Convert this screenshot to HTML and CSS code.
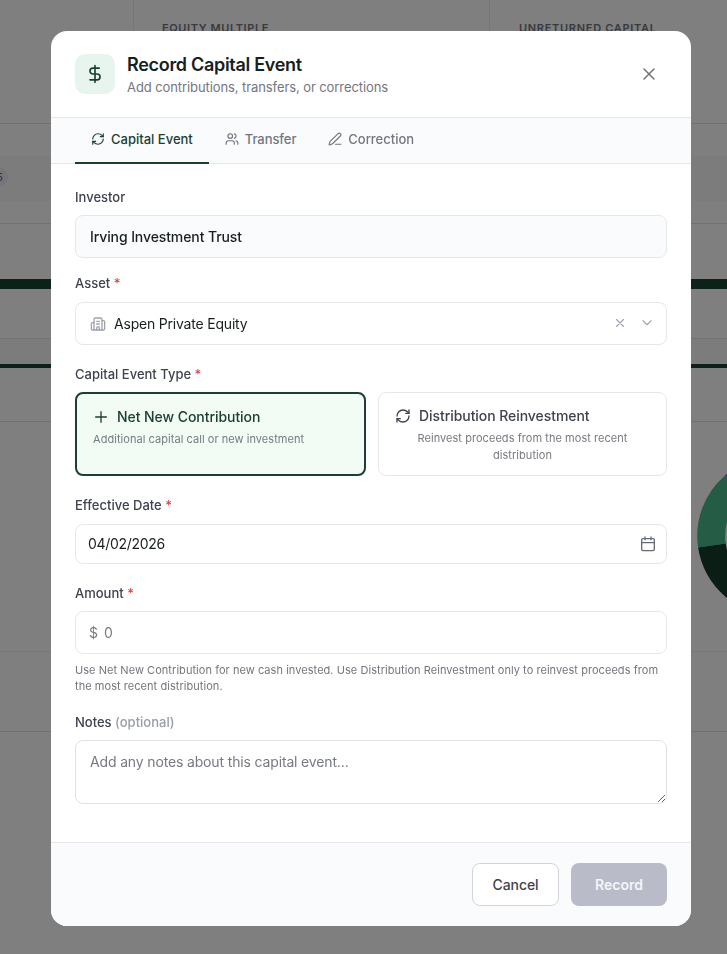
FILE: index.html
```html
<!DOCTYPE html>
<html lang="en">
<head>
<meta charset="utf-8">
<title>Record Capital Event</title>
<link rel="stylesheet" href="styles.css">
</head>
<body>
<svg class="sprite" aria-hidden="true">
  <symbol id="refresh" viewBox="0 0 24 24"><path d="M3 12a9 9 0 0 1 9-9 9.75 9.75 0 0 1 6.74 2.74L21 8"/><path d="M21 3v5h-5"/><path d="M21 12a9 9 0 0 1-9 9 9.75 9.75 0 0 1-6.74-2.74L3 16"/><path d="M8 16H3v5"/></symbol>
  <symbol id="close" viewBox="0 0 24 24"><path d="M18 6 6 18M6 6l12 12"/></symbol>
</svg>
<div class="page">
  <div class="stats">
    <div class="stat stat-first"></div>
    <div class="stat">EQUITY MULTIPLE</div>
    <div class="stat">UNRETURNED CAPITAL</div>
  </div>
  <div class="filters"><div class="filter-band"><span class="count">5</span></div></div>
  <div class="row row-a"></div>
  <div class="bar bar-thick"></div>
  <div class="row row-b"></div>
  <div class="row row-c"></div>
  <div class="bar bar-thin"></div>
  <div class="row row-d"></div>
  <div class="row row-e">
    <svg class="donut" viewBox="0 0 160 160"><path class="seg-purple" d="M28 19.500A79.500 79.500 0 0 1 80 .5V28A52 52 0 0 0 47 40Z"/><path class="seg-green" d="M1.1 91.5A79.5 79.5 0 0 1 28 19.500L47 40A52 52 0 0 0 28.700 87.500Z"/><path class="seg-dark" d="M1.1 91.5 28.700 87.500A52 52 0 0 0 80 132V159.500A79.500 79.500 0 0 1 1.1 91.500Z"/></svg>
  </div>
  <div class="row row-f"></div>
</div>
<div class="overlay">
  <div class="modal" role="dialog">
    <header class="header">
      <div class="badge"><svg class="icon i20" viewBox="0 0 24 24"><path d="M12 2v20M17 5H9.5a3.5 3.5 0 0 0 0 7h5a3.5 3.5 0 0 1 0 7H6"/></svg></div>
      <div class="heading">
        <h1 class="title">Record Capital Event</h1>
        <p class="subtitle">Add contributions, transfers, or corrections</p>
      </div>
      <button class="close"><svg class="icon i20 slim"><use href="#close"/></svg></button>
    </header>
    <nav class="tabs">
      <button class="tab active"><svg class="icon i14"><use href="#refresh"/></svg>Capital Event</button>
      <button class="tab"><svg class="icon i14" viewBox="0 0 24 24"><path d="M16 21v-2a4 4 0 0 0-4-4H6a4 4 0 0 0-4 4v2"/><circle cx="9" cy="7" r="4"/><path d="M22 21v-2a4 4 0 0 0-3-3.87M16 3.13a4 4 0 0 1 0 7.75"/></svg>Transfer</button>
      <button class="tab tab-correction"><svg class="icon i14" viewBox="0 0 24 24"><path d="M13 21h9"/><path d="M21.17 6.81a1 1 0 0 0-3.98-3.98L3.84 16.17a2 2 0 0 0-.5.83l-1.32 4.35a.5.5 0 0 0 .62.62l4.35-1.32a2 2 0 0 0 .83-.5z"/></svg>Correction</button>
    </nav>
    <main class="body">
      <div class="label">Investor</div>
      <div class="control readonly">Irving Investment Trust</div>

      <div class="label label-asset">Asset <span class="req">*</span></div>
      <div class="control select">
        <svg class="icon i16 muted" viewBox="0 0 24 24"><path d="M10 12h4M10 8h4M14 21v-3a2 2 0 0 0-4 0v3"/><path d="M6 10H4a2 2 0 0 0-2 2v7a2 2 0 0 0 2 2h16a2 2 0 0 0 2-2V9a2 2 0 0 0-2-2h-2"/><path d="M6 21V5a2 2 0 0 1 2-2h8a2 2 0 0 1 2 2v16"/></svg>
        <span class="select-value">Aspen Private Equity</span>
        <svg class="icon i14 muted"><use href="#close"/></svg>
        <svg class="icon i14 muted" viewBox="0 0 24 24"><path d="m5 8 7 7 7-7"/></svg>
      </div>

      <div class="label label-type">Capital Event Type <span class="req">*</span></div>
      <div class="options">
        <button class="option selected">
          <span class="option-title"><svg class="icon i16" viewBox="0 0 24 24"><path d="M4 12h16M12 4v16"/></svg>Net New Contribution</span>
          <span class="option-text">Additional capital call or new investment</span>
        </button>
        <button class="option">
          <span class="option-title"><svg class="icon i16"><use href="#refresh"/></svg>Distribution Reinvestment</span>
          <span class="option-text">Reinvest proceeds from the most recent distribution</span>
        </button>
      </div>

      <div class="label label-date">Effective Date <span class="req">*</span></div>
      <div class="control date"><span>04/02/2026</span><svg class="icon i16" viewBox="0 0 24 24"><path d="M7.5 1.5v4M16.5 1.5v4"/><rect x="2.5" y="4" width="19" height="18" rx="2"/><path d="M2.5 10h19"/></svg></div>

      <div class="label label-amount">Amount <span class="req">*</span></div>
      <div class="control amount"><span class="currency">$</span><span>0</span></div>
      <p class="hint">Use Net New Contribution for new cash invested. Use Distribution Reinvestment only to reinvest proceeds from the most recent distribution.</p>

      <div class="label label-notes">Notes <span class="optional">(optional)</span></div>
      <textarea class="notes" placeholder="Add any notes about this capital event..."></textarea>
    </main>
    <footer class="footer">
      <button class="btn cancel">Cancel</button>
      <button class="btn record">Record</button>
    </footer>
  </div>
</div>
</body>
</html>
```
FILE: styles.css
```css
* { box-sizing: border-box; }
body { margin: 0; font-family: Inter, sans-serif; overflow: hidden; }
button { font: inherit; border: 0; background: none; padding: 0; margin: 0; }
h1, p { margin: 0; }
.sprite { display: none; }

/* Dashboard behind the dialog */
.page { height: 954px; background: #fff; overflow: hidden; }
.stats { height: 124px; display: grid; grid-template-columns: 134px 356px 1fr; border-bottom: 1px solid #e0e1e1; }
.stat { padding: 21px 0 0 28px; border-right: 1px solid #eceded; font-size: 11px; line-height: 14px; font-weight: 600; letter-spacing: .6px; color: #72757c; }
.stat:last-child { padding-left: 29px; border: 0; letter-spacing: .7px; }
.filters { height: 100px; padding-top: 32px; border-bottom: 1px solid #e0e1e1; }
.filter-band { height: 45px; padding-top: 11px; background: #f9f9fa; }
.count { display: block; width: 20px; height: 20px; margin-left: -12px; border-radius: 10px; background: #ececf0; font-size: 11px; line-height: 20px; text-align: center; padding-left: 3px; color: #666; }
.row { border-bottom: 1px solid #e2e3e3; }
.row-a { height: 55px; border: 0; }
.row-b { height: 50px; }
.row-c { height: 25px; background: #f8f8f8; border: 0; }
.row-d { height: 54px; }
.row-e { height: 230px; position: relative; border-color: #f0f0f0; }
.row-f { height: 80px; }
.bar { background: #194430; }
.bar-thick { height: 10px; }
.bar-thin { height: 4px; }
.donut { position: absolute; left: 697px; top: 34px; width: 160px; height: 160px; }
.seg-purple { fill: #7064e8; }
.seg-green { fill: #4ab88a; }
.seg-dark { fill: #173c2b; }

.overlay { position: fixed; inset: 0; display: flex; align-items: flex-start; justify-content: center; padding: 31px 0 0 15px; background: rgba(0, 0, 0, .5); }
.modal { width: 640px; height: 895px; display: flex; flex-direction: column; background: #fff; border-radius: 16px; overflow: hidden; }
.icon { display: block; flex: none; fill: none; stroke: currentColor; stroke-width: 2; stroke-linecap: round; stroke-linejoin: round; }
.i14 { width: 14px; height: 14px; }
.i16 { width: 16px; height: 16px; }
.i20 { width: 20px; height: 20px; }
.slim { stroke-width: 1.8; }
.muted { color: #a0a3ad; }

.header { flex: none; height: 87px; padding: 0 32px 0 24px; display: flex; align-items: center; gap: 12px; border-bottom: 1px solid #e5e7eb; }
.badge { width: 40px; height: 40px; display: grid; place-items: center; border-radius: 10px; background: #e8f5ee; color: #1a4035; }
.heading { flex: 1; padding-top: 2px; }
.title { font-size: 18px; line-height: 24px; font-weight: 600; letter-spacing: -.3px; color: #16211d; }
.subtitle { font-size: 13px; line-height: 20px; letter-spacing: -.09px; color: #73767f; }
.close { color: #70737c; }

.tabs { flex: none; height: 46px; padding-left: 24px; display: flex; background: #f9fbfc; border-bottom: 1px solid #e5e7eb; }
.tab { height: 46px; padding: 0 16px 2px; display: flex; align-items: center; gap: 6px; font-size: 13px; font-weight: 500; letter-spacing: -.08px; color: #73767f; border-bottom: 2px solid transparent; }
.tab-correction { letter-spacing: -.02px; }
.active { letter-spacing: 0; color: #1a4035; border-color: #1a4035; }

.body { flex: 1; padding: 23px 24px 0; }
.label { height: 28px; font-size: 13px; line-height: 20px; font-weight: 500; color: #3f424f; }
.req { color: #dc4545; }
.optional { color: #9a9daa; }
.label-asset { margin-top: 15px; height: 29px; }
.label-type { margin-top: 19px; }
.label-date { margin-top: 19px; height: 29px; }
.label-amount { margin-top: 19px; }
.label-notes { margin-top: 18px; }
.control { height: 43px; padding: 0 14px; display: flex; align-items: center; border: 1px solid #e5e7eb; border-radius: 8px; font-size: 14px; color: #18201d; }
.readonly { background: #f9fbfc; font-weight: 500; letter-spacing: -.1px; }
.select { padding-right: 12px; gap: 8px; }
.select-value { flex: 1; letter-spacing: -.2px; }
.select .i14 { margin-bottom: 2px; }
.select .i14:last-child { margin-left: 5px; }
.date { height: 40px; padding: 0 10px 1px 12px; justify-content: space-between; letter-spacing: -.3px; }
.date .icon { color: #686b78; }
.amount { padding-left: 13px; gap: 6px; color: #777a80; }
.hint { padding-top: 8px; font-size: 11px; line-height: 16px; color: #73767d; letter-spacing: .05px; }

.options { display: grid; grid-template-columns: 291px 1fr; gap: 12px; height: 84px; }
.option { display: flex; flex-direction: column; border: 1px solid #e5e7eb; border-radius: 8px; padding: 14px 16px 0; color: #3f424f; }
.option-title { display: flex; align-items: center; gap: 8px; font-size: 14px; line-height: 18px; font-weight: 500; letter-spacing: -.06px; }
.option-text { align-self: center; padding: 5px 8px 0; font-size: 11px; line-height: 17px; text-align: center; color: #777a80; letter-spacing: .05px; }
.selected { border: 2px solid #1a4035; background: #f2fcf5; color: #1a4035; }
.selected .option-text { align-self: flex-start; padding-left: 0; }

.notes { display: block; width: 100%; height: 64px; padding: 11px 14px; border: 1px solid #e2e3e1; border-radius: 8px; font: 14px/20px Inter, sans-serif; letter-spacing: -.15px; resize: vertical; outline: 0; }
.notes::placeholder { color: #777a80; }

.footer { flex: none; height: 84px; padding: 20px 24px 0; display: flex; justify-content: flex-end; gap: 12px; background: #f9fbfc; border-top: 1px solid #e5e7eb; }
.btn { height: 43px; border-radius: 8px; font-size: 14px; font-weight: 500; }
.cancel { width: 87px; background: #fff; border: 1px solid #d1d5db; color: #3f424f; letter-spacing: -.1px; }
.record { width: 96px; background: #b9bbc8; color: #f5f6fa; font-weight: 600; }
```
